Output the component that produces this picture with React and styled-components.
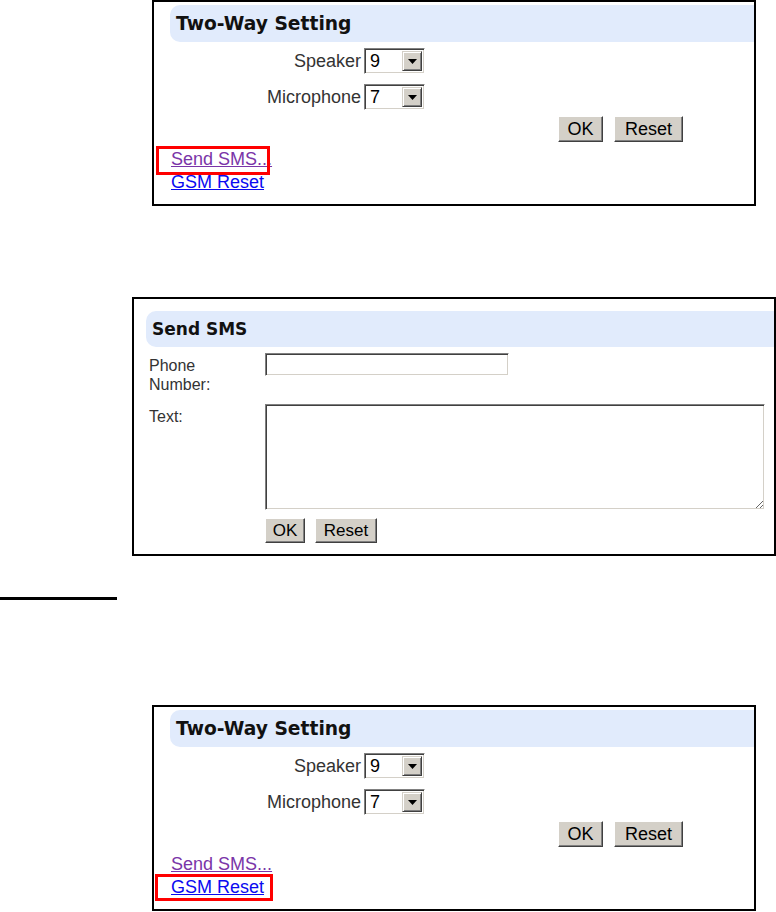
import React from 'react';
import styled, { createGlobalStyle } from 'styled-components';

const GlobalStyle = createGlobalStyle`
  html, body {
    margin: 0;
    padding: 0;
    background: #fff;
  }
  body {
    width: 776px;
    height: 912px;
    overflow: hidden;
    font-family: "Liberation Sans", Arial, sans-serif;
  }
`;

const Page = styled.div`
  display: flex;
  flex-direction: column;
  width: 776px;
  height: 912px;
`;

const Panel = styled.section`
  box-sizing: border-box;
  margin-top: ${p => p.$top}px;
  margin-left: ${p => p.$left}px;
  width: ${p => p.$width}px;
  height: ${p => p.$height}px;
  border: 2px solid #000;
  padding: ${p => p.$pad};
  display: flex;
  flex-direction: column;
`;

const Header = styled.h2`
  margin: 0;
  height: ${p => p.$h}px;
  display: flex;
  align-items: center;
  padding-left: 6px;
  background: #e1ebfc;
  border-radius: 10px 0 0 10px;
  font-family: "DejaVu Sans", Verdana, sans-serif;
  font-weight: bold;
  font-size: ${p => p.$size}px;
  color: #111;
`;

const SettingGrid = styled.div`
  display: grid;
  grid-template-columns: 191px auto;
  column-gap: 3px;
  row-gap: 10px;
  margin-top: 6px;
  justify-content: start;
  align-items: center;
`;

const Label = styled.span`
  justify-self: end;
  font-size: 18px;
  color: #333;
`;

const Select = styled.div`
  box-sizing: border-box;
  width: 61px;
  height: 26px;
  display: flex;
  align-items: stretch;
  padding: 2px;
  background: #fff;
  border: 1px solid;
  border-color: #808080 #fff #fff #808080;
  box-shadow: inset 1px 1px #404040, inset -1px -1px #d4d0c8;
`;

const SelectValue = styled.span`
  flex: 1;
  padding-left: 3px;
  line-height: 20px;
  font-size: 18px;
  color: #000;
`;

const SelectArrow = styled.span`
  box-sizing: border-box;
  width: 20px;
  display: flex;
  align-items: center;
  justify-content: center;
  background: #d4d0c8;
  border: 1px solid;
  border-color: #d4d0c8 #404040 #404040 #d4d0c8;
  box-shadow: inset 1px 1px #fff, inset -1px -1px #808080;
`;

const ButtonRow = styled.div`
  display: flex;
  gap: ${p => p.$gap}px;
  margin-left: ${p => p.$indent}px;
  margin-top: ${p => p.$top}px;
`;

const Button = styled.button`
  box-sizing: border-box;
  width: ${p => p.$w}px;
  height: ${p => p.$h}px;
  padding: 0;
  background: #d4d0c8;
  border: 1px solid;
  border-color: #fff #404040 #404040 #fff;
  box-shadow: inset -1px -1px #808080;
  font-family: "Liberation Sans", Arial, sans-serif;
  font-size: ${p => p.$size}px;
  color: #000;
`;

const Links = styled.div`
  display: flex;
  flex-direction: column;
  align-items: flex-start;
  margin-top: 6px;
  padding-left: 1px;
  line-height: 23px;
`;

const LinkItem = styled.span`
  position: relative;
  display: inline-block;
`;

const Link = styled.a`
  font-size: 18px;
  color: ${p => (p.$visited ? '#7a35a8' : '#0a0af0')};
  text-decoration: underline;
  cursor: pointer;
`;

const Highlight = styled.span`
  position: absolute;
  left: ${p => p.$l}px;
  right: ${p => p.$r}px;
  top: ${p => p.$t}px;
  bottom: ${p => p.$b}px;
  border: 3px solid #f00;
  pointer-events: none;
`;

const SmsGrid = styled.div`
  display: grid;
  grid-template-columns: 119px 500px;
  row-gap: 10px;
  margin-top: 6px;
  align-items: start;
`;

const SmsLabel = styled.span`
  padding: 3px 0 0 3px;
  font-size: 16px;
  line-height: 19px;
  color: #333;
`;

const inset = `
  box-sizing: border-box;
  margin: 0;
  background: #fff;
  border: 1px solid;
  border-color: #808080 #fff #fff #808080;
  box-shadow: inset 1px 1px #404040, inset -1px -1px #d4d0c8;
  outline: none;
`;

const TextInput = styled.input`
  ${inset}
  width: 244px;
  height: 23px;
`;

const TextArea = styled.textarea`
  ${inset}
  width: 500px;
  height: 106px;
  resize: both;
  display: block;
`;

const FieldCell = styled.div`
  grid-column: 2;
`;

const Rule = styled.div`
  width: 117px;
  height: 3px;
  margin-top: 41px;
  background: #000;
`;

const Arrow = () => (
  <svg width="9" height="5" viewBox="0 0 9 5">
    <polygon points="0,0 9,0 4.5,5" fill="#000" />
  </svg>
);

const DropDown = ({ value }) => (
  <Select>
    <SelectValue>{value}</SelectValue>
    <SelectArrow>
      <Arrow />
    </SelectArrow>
  </Select>
);

function TwoWayPanel({ top, mark }) {
  return (
    <Panel $top={top} $left={152} $width={604} $height={206} $pad="3px 0 0 16px">
      <Header $h={37} $size={18.7}>Two-Way Setting</Header>
      <SettingGrid>
        <Label>Speaker</Label>
        <DropDown value="9" />
        <Label>Microphone</Label>
        <DropDown value="7" />
      </SettingGrid>
      <ButtonRow $indent={388} $gap={11} $top={6}>
        <Button $w={45} $h={26} $size={18}>OK</Button>
        <Button $w={69} $h={26} $size={18}>Reset</Button>
      </ButtonRow>
      <Links>
        <LinkItem>
          <Link $visited>Send SMS...</Link>
          {mark === 'sms' && <Highlight $l={-15} $r={2} $t={-2} $b={-4} />}
        </LinkItem>
        <LinkItem>
          <Link>GSM Reset</Link>
          {mark === 'gsm' && <Highlight $l={-16} $r={-9} $t={-2} $b={-2} />}
        </LinkItem>
      </Links>
    </Panel>
  );
}

function SendSmsPanel() {
  return (
    <Panel $top={91} $left={132} $width={644} $height={259} $pad="12px 0 0 12px">
      <Header $h={36} $size={17}>Send SMS</Header>
      <SmsGrid>
        <SmsLabel>Phone<br />Number:</SmsLabel>
        <TextInput type="text" />
        <SmsLabel>Text:</SmsLabel>
        <TextArea />
        <FieldCell>
          <ButtonRow $indent={0} $gap={10} $top={-2}>
            <Button $w={40} $h={25} $size={17}>OK</Button>
            <Button $w={62} $h={25} $size={17}>Reset</Button>
          </ButtonRow>
        </FieldCell>
      </SmsGrid>
    </Panel>
  );
}

export default function App() {
  return (
    <>
      <GlobalStyle />
      <Page>
        <TwoWayPanel top={0} mark="sms" />
        <SendSmsPanel />
        <Rule />
        <TwoWayPanel top={105} mark="gsm" />
      </Page>
    </>
  );
}
